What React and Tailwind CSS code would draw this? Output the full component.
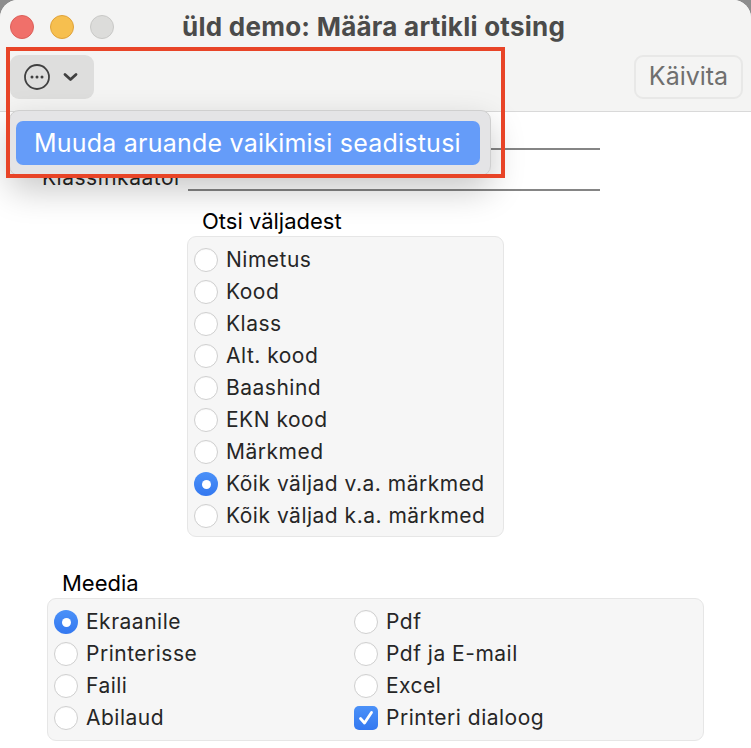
import { useState } from 'react';

const FONT = "font-['Inter','Liberation_Sans',sans-serif]";

const searchFields = [
  'Nimetus',
  'Kood',
  'Klass',
  'Alt. kood',
  'Baashind',
  'EKN kood',
  'Märkmed',
  'Kõik väljad v.a. märkmed',
  'Kõik väljad k.a. märkmed',
];

const mediaLeft = ['Ekraanile', 'Printerisse', 'Faili', 'Abilaud'];
const mediaRight = ['Pdf', 'Pdf ja E-mail', 'Excel'];

function Radio({ label, checked, onSelect }) {
  return (
    <button type="button" onClick={onSelect} className="flex h-8 items-center gap-[8px] text-left">
      {checked ? (
        <span className="flex h-6 w-6 items-center justify-center rounded-full bg-gradient-to-b from-[#4b91f8] to-[#3478f0]">
          <span className="h-[9px] w-[9px] rounded-full bg-white" />
        </span>
      ) : (
        <span className="h-6 w-6 rounded-full border border-[#cfcfcf] bg-white shadow-[inset_0_1px_1px_rgba(0,0,0,0.03)]" />
      )}
      <span className="text-[21px] leading-8 tracking-[0.5px] text-[#262626]">{label}</span>
    </button>
  );
}

function Checkbox({ label, checked, onToggle }) {
  return (
    <button type="button" onClick={onToggle} className="flex h-8 items-center gap-[8px] text-left">
      <span className="flex h-6 w-6 items-center justify-center rounded-[5px] bg-gradient-to-b from-[#4b91f8] to-[#3478f0]">
        {checked && (
          <svg width="18" height="18" viewBox="0 0 18 18" fill="none">
            <path d="M3.5 9.5 L7.5 14 L14.5 3.5" stroke="#fff" strokeWidth="2.8" strokeLinecap="round" strokeLinejoin="round" />
          </svg>
        )}
      </span>
      <span className="text-[21px] leading-8 tracking-[0.5px] text-[#262626]">{label}</span>
    </button>
  );
}

export default function App() {
  const [field, setField] = useState('Kõik väljad v.a. märkmed');
  const [media, setMedia] = useState('Ekraanile');
  const [printDialog, setPrintDialog] = useState(true);

  return (
    <div className={`${FONT} relative h-[748px] w-[751px] overflow-hidden bg-[#8d8d8d]`}>
      <div className="flex h-full flex-col overflow-hidden rounded-t-[18px] bg-white">
        {/* title + toolbar */}
        <header className="h-[112px] shrink-0 border-b border-[#d9d9d9] bg-[#f4f4f3]">
          <div className="relative flex h-[52px] items-center pl-[10px] pt-[2px]">
            <div className="flex gap-4">
              <span className="h-6 w-6 rounded-full border border-[#db5f59] bg-[#f0706a]" />
              <span className="h-6 w-6 rounded-full border border-[#dfa23a] bg-[#f6bf4f]" />
              <span className="h-6 w-6 rounded-full border border-[#c8c8c6] bg-[#dcdcda]" />
            </div>
            <h1 className="-mt-[2px] ml-[68px] text-[26px] font-bold tracking-[0.25px] text-[#4b4b4a]">üld demo: Määra artikli otsing</h1>
          </div>
          <div className="flex items-center justify-between pl-[10px] pr-[8px] pt-[3px]">
            <div className="flex h-[44px] w-[84px] items-center gap-[13px] rounded-[9px] bg-[#dededd] pl-[14px]">
              <svg width="26" height="26" viewBox="0 0 26 26" fill="none">
                <circle cx="13" cy="13" r="12" stroke="#404040" strokeWidth="1.8" />
                <circle cx="8" cy="13" r="1.5" fill="#404040" />
                <circle cx="13" cy="13" r="1.5" fill="#404040" />
                <circle cx="18" cy="13" r="1.5" fill="#404040" />
              </svg>
              <svg width="15" height="10" viewBox="0 0 15 10" fill="none">
                <path d="M2 2.5 L7.5 7.5 L13 2.5" stroke="#404040" strokeWidth="2.8" strokeLinecap="round" strokeLinejoin="round" />
              </svg>
            </div>
            <button type="button" className="flex h-[44px] w-[109px] items-center justify-center rounded-[9px] border-2 border-[#e8e8e7] text-[25px] text-[#6f6f6e]">
              Käivita
            </button>
          </div>
        </header>

        {/* form */}
        <main className="flex flex-col">
          <div className="ml-[188px] mt-[36px] h-[2px] w-[412px] bg-[#858585]" />
          <div className="mt-[15px] flex h-[26px] items-end">
            <span className="ml-[42px] w-[146px] text-[21px] leading-[26px] tracking-[0.5px] text-[#262626]">Klassifikaator</span>
            <div className="h-[2px] w-[412px] bg-[#858585]" />
          </div>

          <div className="ml-[187px] mt-[15px] w-[317px]">
            <div className="pl-[15px] text-[22px] leading-[30px] text-black">Otsi väljadest</div>
            <div className="flex flex-col rounded-[9px] border border-[#e6e6e6] bg-[#f6f6f6] px-[6px] pt-[7px] pb-[4px]">
              {searchFields.map((name) => (
                <Radio key={name} label={name} checked={field === name} onSelect={() => setField(name)} />
              ))}
            </div>
          </div>

          <div className="ml-[47px] mt-[31px] w-[657px]">
            <div className="pl-[15px] text-[22px] leading-[30px] text-black">Meedia</div>
            <div className="grid grid-cols-[300px_1fr] rounded-[9px] border border-[#e6e6e6] bg-[#f6f6f6] px-[6px] pt-[7px] pb-[6px]">
              <div className="flex flex-col">
                {mediaLeft.map((name) => (
                  <Radio key={name} label={name} checked={media === name} onSelect={() => setMedia(name)} />
                ))}
              </div>
              <div className="flex flex-col">
                {mediaRight.map((name) => (
                  <Radio key={name} label={name} checked={media === name} onSelect={() => setMedia(name)} />
                ))}
                <Checkbox label="Printeri dialoog" checked={printDialog} onToggle={() => setPrintDialog(!printDialog)} />
              </div>
            </div>
          </div>
        </main>
      </div>

      {/* open dropdown menu */}
      <div className="absolute left-[9px] top-[110px] flex h-[66px] w-[482px] items-center rounded-[10px] border border-[#cfcfcf] bg-[#e4e4e6] pl-[6px] pr-[10px] shadow-[0_14px_34px_rgba(0,0,0,0.22)]">
        <div className="flex h-[44px] w-full items-center rounded-[7px] bg-[#659cf9] pl-[18px] pt-[2px] text-[25px] tracking-[0.22px] text-white">
          Muuda aruande vaikimisi seadistusi
        </div>
      </div>

      {/* red annotation frame */}
      <div className="pointer-events-none absolute left-[6px] top-[47px] h-[131px] w-[499px] border-[4px] border-[#e84427]" />
    </div>
  );
}
